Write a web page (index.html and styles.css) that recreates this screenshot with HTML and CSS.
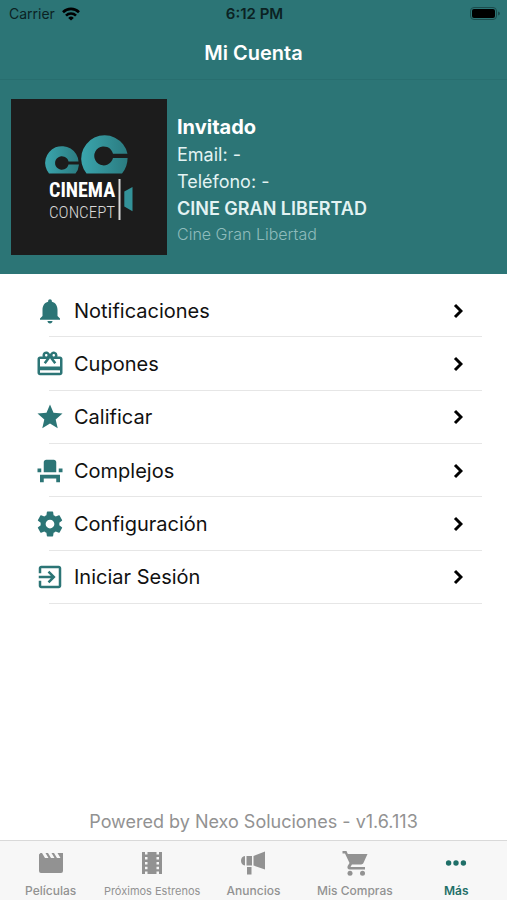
FILE: index.html
```html
<!DOCTYPE html>
<html lang="es">
<head>
  <meta charset="UTF-8">
  <meta name="viewport" content="width=device-width, initial-scale=1.0">
  <title>Mi Cuenta</title>
  <link rel="stylesheet" href="styles.css">
</head>
<body>

  <header class="top">
    <div class="status-bar">
      <div class="carrier">
        <span>Carrier</span>
        <svg class="wifi" viewBox="0 0 18 14" fill="none" stroke="#000" stroke-width="2.6">
          <path d="M1 5.2a11.4 11.4 0 0 1 16 0"/>
          <path d="M4 8.6a7 7 0 0 1 10 0"/>
          <path d="M9 13.5L6.2 10.9a4 4 0 0 1 5.6 0z" fill="#000" stroke="none"/>
        </svg>
      </div>
      <div class="time">6:12 PM</div>
      <div class="battery">
        <svg viewBox="0 0 30 14">
          <rect x="0.5" y="0.5" width="26" height="12" rx="3.5" fill="none" stroke="#1b4c4d"/>
          <rect x="2" y="2" width="23" height="9" rx="2" fill="#000"/>
          <path d="M28 4.5q2 .6 2 2t-2 2z" fill="#1b4c4d"/>
        </svg>
      </div>
    </div>
    <h1>Mi Cuenta</h1>
  </header>

  <section class="profile">
    <svg class="logo" viewBox="0 0 156 156" role="img" aria-label="Cinema Concept">
      <defs>
        <linearGradient id="teal" x1="0" y1="0" x2="1" y2="0">
          <stop offset="0" stop-color="#3aa5ad"/>
          <stop offset="1" stop-color="#2b7b80"/>
        </linearGradient>
      </defs>
      <rect width="156" height="156" fill="#1c1c1c"/>
      <path d="M38 74.5A16.7 16.7 0 1 1 67.5 62.5H57.5A6.8 6.8 0 1 0 57.5 65.5H68Q67.5 71 64.5 74.5z" fill="url(#teal)"/>
      <path d="M75.5 74.5A23.4 23.4 0 1 1 116.5 54.8H102A9.5 9.5 0 1 0 102 59H116.6Q116.5 68 111 74.5z" fill="url(#teal)"/>
      <text class="logo-bold" x="38" y="98">CINEMA</text>
      <text class="logo-thin" x="38" y="119">CONCEPT</text>
      <rect x="107.5" y="80" width="2" height="41" fill="#d8d8d8"/>
      <path d="M121.5 88L113.3 92.5V107.5L121.5 112.3z" fill="#339299"/>
    </svg>
    <div class="info">
      <h2>Invitado</h2>
      <p>Email: -</p>
      <p>Teléfono: -</p>
      <p class="cinema">CINE GRAN LIBERTAD</p>
      <p class="branch">Cine Gran Libertad</p>
    </div>
  </section>

  <main>
    <nav class="menu">
      <a href="#">
        <svg class="icon" viewBox="0 0 24 24"><path d="M12 22c1.1 0 2-.9 2-2h-4c0 1.1.89 2 2 2zm6-6v-5c0-3.07-1.64-5.64-4.5-6.32V4c0-.83-.67-1.5-1.5-1.5s-1.5.67-1.5 1.5v.68C7.63 5.36 6 7.92 6 11v5l-2 2v1h16v-1l-2-2z"/></svg>
        <span>Notificaciones</span>
        <svg class="chevron" viewBox="0 0 10 16"><path d="M2 2l6 6-6 6"/></svg>
      </a>
      <a href="#">
        <svg class="icon" viewBox="0 0 24 24"><path d="M20 6h-2.18c.11-.31.18-.65.18-1a2.996 2.996 0 0 0-5.5-1.65l-.5.67-.5-.68C10.96 2.54 10.05 2 9 2 7.34 2 6 3.34 6 5c0 .35.07.69.18 1H4c-1.11 0-1.99.89-1.99 2L2 19c0 1.11.89 2 2 2h16c1.11 0 2-.89 2-2V8c0-1.11-.89-2-2-2zm-5-2c.55 0 1 .45 1 1s-.45 1-1 1-1-.45-1-1 .45-1 1-1zM9 4c.55 0 1 .45 1 1s-.45 1-1 1-1-.45-1-1 .45-1 1-1zm11 15H4v-2h16v2zm0-5H4V8h5.08L7 10.83 8.62 12 11 8.76l1-1.36 1 1.36L15.38 12 17 10.83 14.92 8H20v6z"/></svg>
        <span>Cupones</span>
        <svg class="chevron" viewBox="0 0 10 16"><path d="M2 2l6 6-6 6"/></svg>
      </a>
      <a href="#">
        <svg class="icon" viewBox="0 0 24 24"><path d="M12 17.27L18.18 21l-1.64-7.03L22 9.24l-7.19-.61L12 2 9.19 8.63 2 9.24l5.46 4.73L5.82 21z"/></svg>
        <span>Calificar</span>
        <svg class="chevron" viewBox="0 0 10 16"><path d="M2 2l6 6-6 6"/></svg>
      </a>
      <a href="#">
        <svg class="icon" viewBox="0 0 24 24"><path d="M4 18v3h3v-3h10v3h3v-6H4zM19 10h3v3h-3zM2 10h3v3H2zM17 13H7V5c0-1.1.9-2 2-2h6c1.1 0 2 .9 2 2v8z"/></svg>
        <span>Complejos</span>
        <svg class="chevron" viewBox="0 0 10 16"><path d="M2 2l6 6-6 6"/></svg>
      </a>
      <a href="#">
        <svg class="icon" viewBox="0 0 24 24"><path d="M19.43 12.98c.04-.32.07-.64.07-.98s-.03-.66-.07-.98l2.11-1.65c.19-.15.24-.42.12-.64l-2-3.46c-.12-.22-.39-.3-.61-.22l-2.49 1c-.52-.4-1.08-.73-1.69-.98l-.38-2.65C14.46 2.18 14.25 2 14 2h-4c-.25 0-.46.18-.49.42l-.38 2.65c-.61.25-1.17.59-1.69.98l-2.49-1c-.23-.09-.49 0-.61.22l-2 3.46c-.13.22-.07.49.12.64l2.11 1.65c-.04.32-.07.65-.07.98s.03.66.07.98l-2.11 1.65c-.19.15-.24.42-.12.64l2 3.46c.12.22.39.3.61.22l2.49-1c.52.4 1.08.73 1.69.98l.38 2.65c.03.24.24.42.49.42h4c.25 0 .46-.18.49-.42l.38-2.65c.61-.25 1.17-.59 1.69-.98l2.49 1c.23.09.49 0 .61-.22l2-3.46c.12-.22.07-.49-.12-.64l-2.11-1.65zM12 15.5c-1.93 0-3.5-1.57-3.5-3.5s1.57-3.5 3.5-3.5 3.5 1.57 3.5 3.5-1.57 3.5-3.5 3.5z"/></svg>
        <span>Configuración</span>
        <svg class="chevron" viewBox="0 0 10 16"><path d="M2 2l6 6-6 6"/></svg>
      </a>
      <a href="#">
        <svg class="icon" viewBox="0 0 24 24"><path d="M10.09 15.59L11.5 17l5-5-5-5-1.41 1.41L12.67 11H3v2h9.67l-2.58 2.59zM19 3H5c-1.11 0-2 .9-2 2v4h2V5h14v14H5v-4H3v4c0 1.1.89 2 2 2h14c1.1 0 2-.9 2-2V5c0-1.1-.9-2-2-2z"/></svg>
        <span>Iniciar Sesión</span>
        <svg class="chevron" viewBox="0 0 10 16"><path d="M2 2l6 6-6 6"/></svg>
      </a>
    </nav>
    <p class="powered">Powered by Nexo Soluciones - v1.6.113</p>
  </main>

  <nav class="tabs">
    <a href="#">
      <svg viewBox="0 0 28 28"><path d="M2 5.5L3.5 4H5l3 5h3.5l-3-5H11l3 5h3.5l-3-5H17l3 5h3.5l-3-5H26v18q0 2-2 2H4q-2 0-2-2z"/></svg>
      <span>Películas</span>
    </a>
    <a href="#">
      <svg viewBox="0 0 28 28"><path fill-rule="evenodd" d="M4 3h3v2.5h2.5V3h9v2.5H21V3h3v22h-3v-2.5h-2.5V25h-9v-2.5H7V25H4zM7 8v2.5h2.5V8zm0 5v2.5h2.5V13zm0 4.8v2.5h2.5v-2.5zM18.5 8v2.5H21V8zm0 5v2.5H21V13zm0 4.8v2.5H21v-2.5z"/></svg>
      <span class="tight">Próximos Estrenos</span>
    </a>
    <a href="#">
      <svg viewBox="0 0 28 28"><path d="M6 7v9.5Q2 16 2 11.8T6 7zM7.5 7H13v9.5H7.5zM14.5 7L26 2.5v18L14.5 16.5zM8 18h4.5v7.5H8z"/></svg>
      <span>Anuncios</span>
    </a>
    <a href="#">
      <svg viewBox="0 0 28 28"><path d="M1.5 2v2.5H4l4.5 9.5-1.8 3c-.9 1.7.3 3.5 2.1 3.5H24V18H9.5l1.4-2.5h9.3c.9 0 1.7-.5 2.1-1.2L26.5 5H6.8L5.5 2z"/><circle cx="9" cy="24.2" r="2.5"/><circle cx="21.5" cy="24.2" r="2.5"/></svg>
      <span>Mis Compras</span>
    </a>
    <a href="#" class="active">
      <svg viewBox="0 0 28 28"><circle cx="6.6" cy="14" r="2.7"/><circle cx="14" cy="14" r="2.7"/><circle cx="21.4" cy="14" r="2.7"/></svg>
      <span>Más</span>
    </a>
  </nav>

</body>
</html>
```
FILE: styles.css
```css
* {
  box-sizing: border-box;
}

body {
  font-family: Inter, "Liberation Sans", sans-serif;
  background-color: #fff;
  color: #111;
  margin: 0;
  display: flex;
  flex-direction: column;
  min-height: 100vh;
}

h1, h2, p {
  margin: 0;
}

a {
  color: inherit;
  text-decoration: none;
}

.top {
  background-color: #2c7576;
  border-bottom: 1px solid #286e6f;
}

.status-bar {
  display: grid;
  grid-template-columns: 1fr auto 1fr;
  align-items: center;
  height: 27px;
  padding: 0 7px 0 9px;
  font-size: 14px;
  color: #0b2223;
}

.carrier {
  display: flex;
  align-items: center;
  gap: 7px;
}

.wifi {
  width: 18px;
  height: 14px;
}

.time {
  font-size: 15px;
  font-weight: 600;
}

.battery {
  display: flex;
  justify-content: flex-end;
}

.battery svg {
  width: 30px;
  height: 14px;
}

h1 {
  font-size: 20px;
  line-height: 52px;
  font-weight: 600;
  text-align: center;
  color: #fff;
}

.profile {
  background-color: #2c7576;
  display: flex;
  gap: 10px;
  padding: 19px 11px;
  color: #fff;
}

.logo {
  width: 156px;
  height: 156px;
  flex-shrink: 0;
}

.logo-bold,
.logo-thin {
  font-family: "Roboto Condensed", Roboto, "Liberation Sans", sans-serif;
}

.logo-bold {
  font-size: 20px;
  font-weight: 700;
  fill: #fff;
}

.logo-thin {
  font-size: 17px;
  font-weight: 300;
  fill: #d8d8d8;
}

.info {
  padding-top: 15px;
  font-size: 18px;
  line-height: 27px;
  color: #e3f3f3;
}

.info h2 {
  font-size: 20px;
  font-weight: 700;
  color: #fff;
}

.info .cinema {
  font-weight: 600;
}

.info .branch {
  font-size: 16px;
  line-height: 24px;
  font-weight: 300;
  color: #8fbcbc;
}

main {
  flex: 1;
  display: flex;
  flex-direction: column;
  padding: 10px 25px 5px;
}

.menu {
  display: grid;
  grid-auto-rows: 1fr;
  min-height: 320px;
}

.menu a {
  display: flex;
  align-items: center;
  gap: 9px;
  padding: 0 19px 0 10px;
  font-size: 20px;
  background: linear-gradient(#e6e6e6, #e6e6e6) right bottom / calc(100% - 24px) 1px no-repeat;
}

.menu span {
  flex: 1;
}

.icon {
  width: 30px;
  height: 30px;
  fill: #2c7576;
}

.chevron {
  width: 10px;
  height: 16px;
  fill: none;
  stroke: #000;
  stroke-width: 3;
}

.powered {
  margin-top: auto;
  font-size: 18px;
  line-height: 26px;
  text-align: center;
  color: #929292;
}

.tabs {
  display: grid;
  grid-template-columns: repeat(5, 1fr);
  height: 60px;
  background-color: #f7f7f7;
  border-top: 1px solid #d9d9d9;
}

.tabs a {
  display: flex;
  flex-direction: column;
  align-items: center;
  gap: 5px;
  padding-top: 8px;
  font-size: 12px;
  line-height: 18px;
  font-weight: 500;
  color: #929292;
  white-space: nowrap;
}

.tabs svg {
  width: 28px;
  height: 28px;
  fill: currentColor;
}

.tabs .tight {
  font-size: 11px;
  font-weight: 400;
}

.tabs .active {
  color: #1f6f68;
  font-weight: 600;
}
```
